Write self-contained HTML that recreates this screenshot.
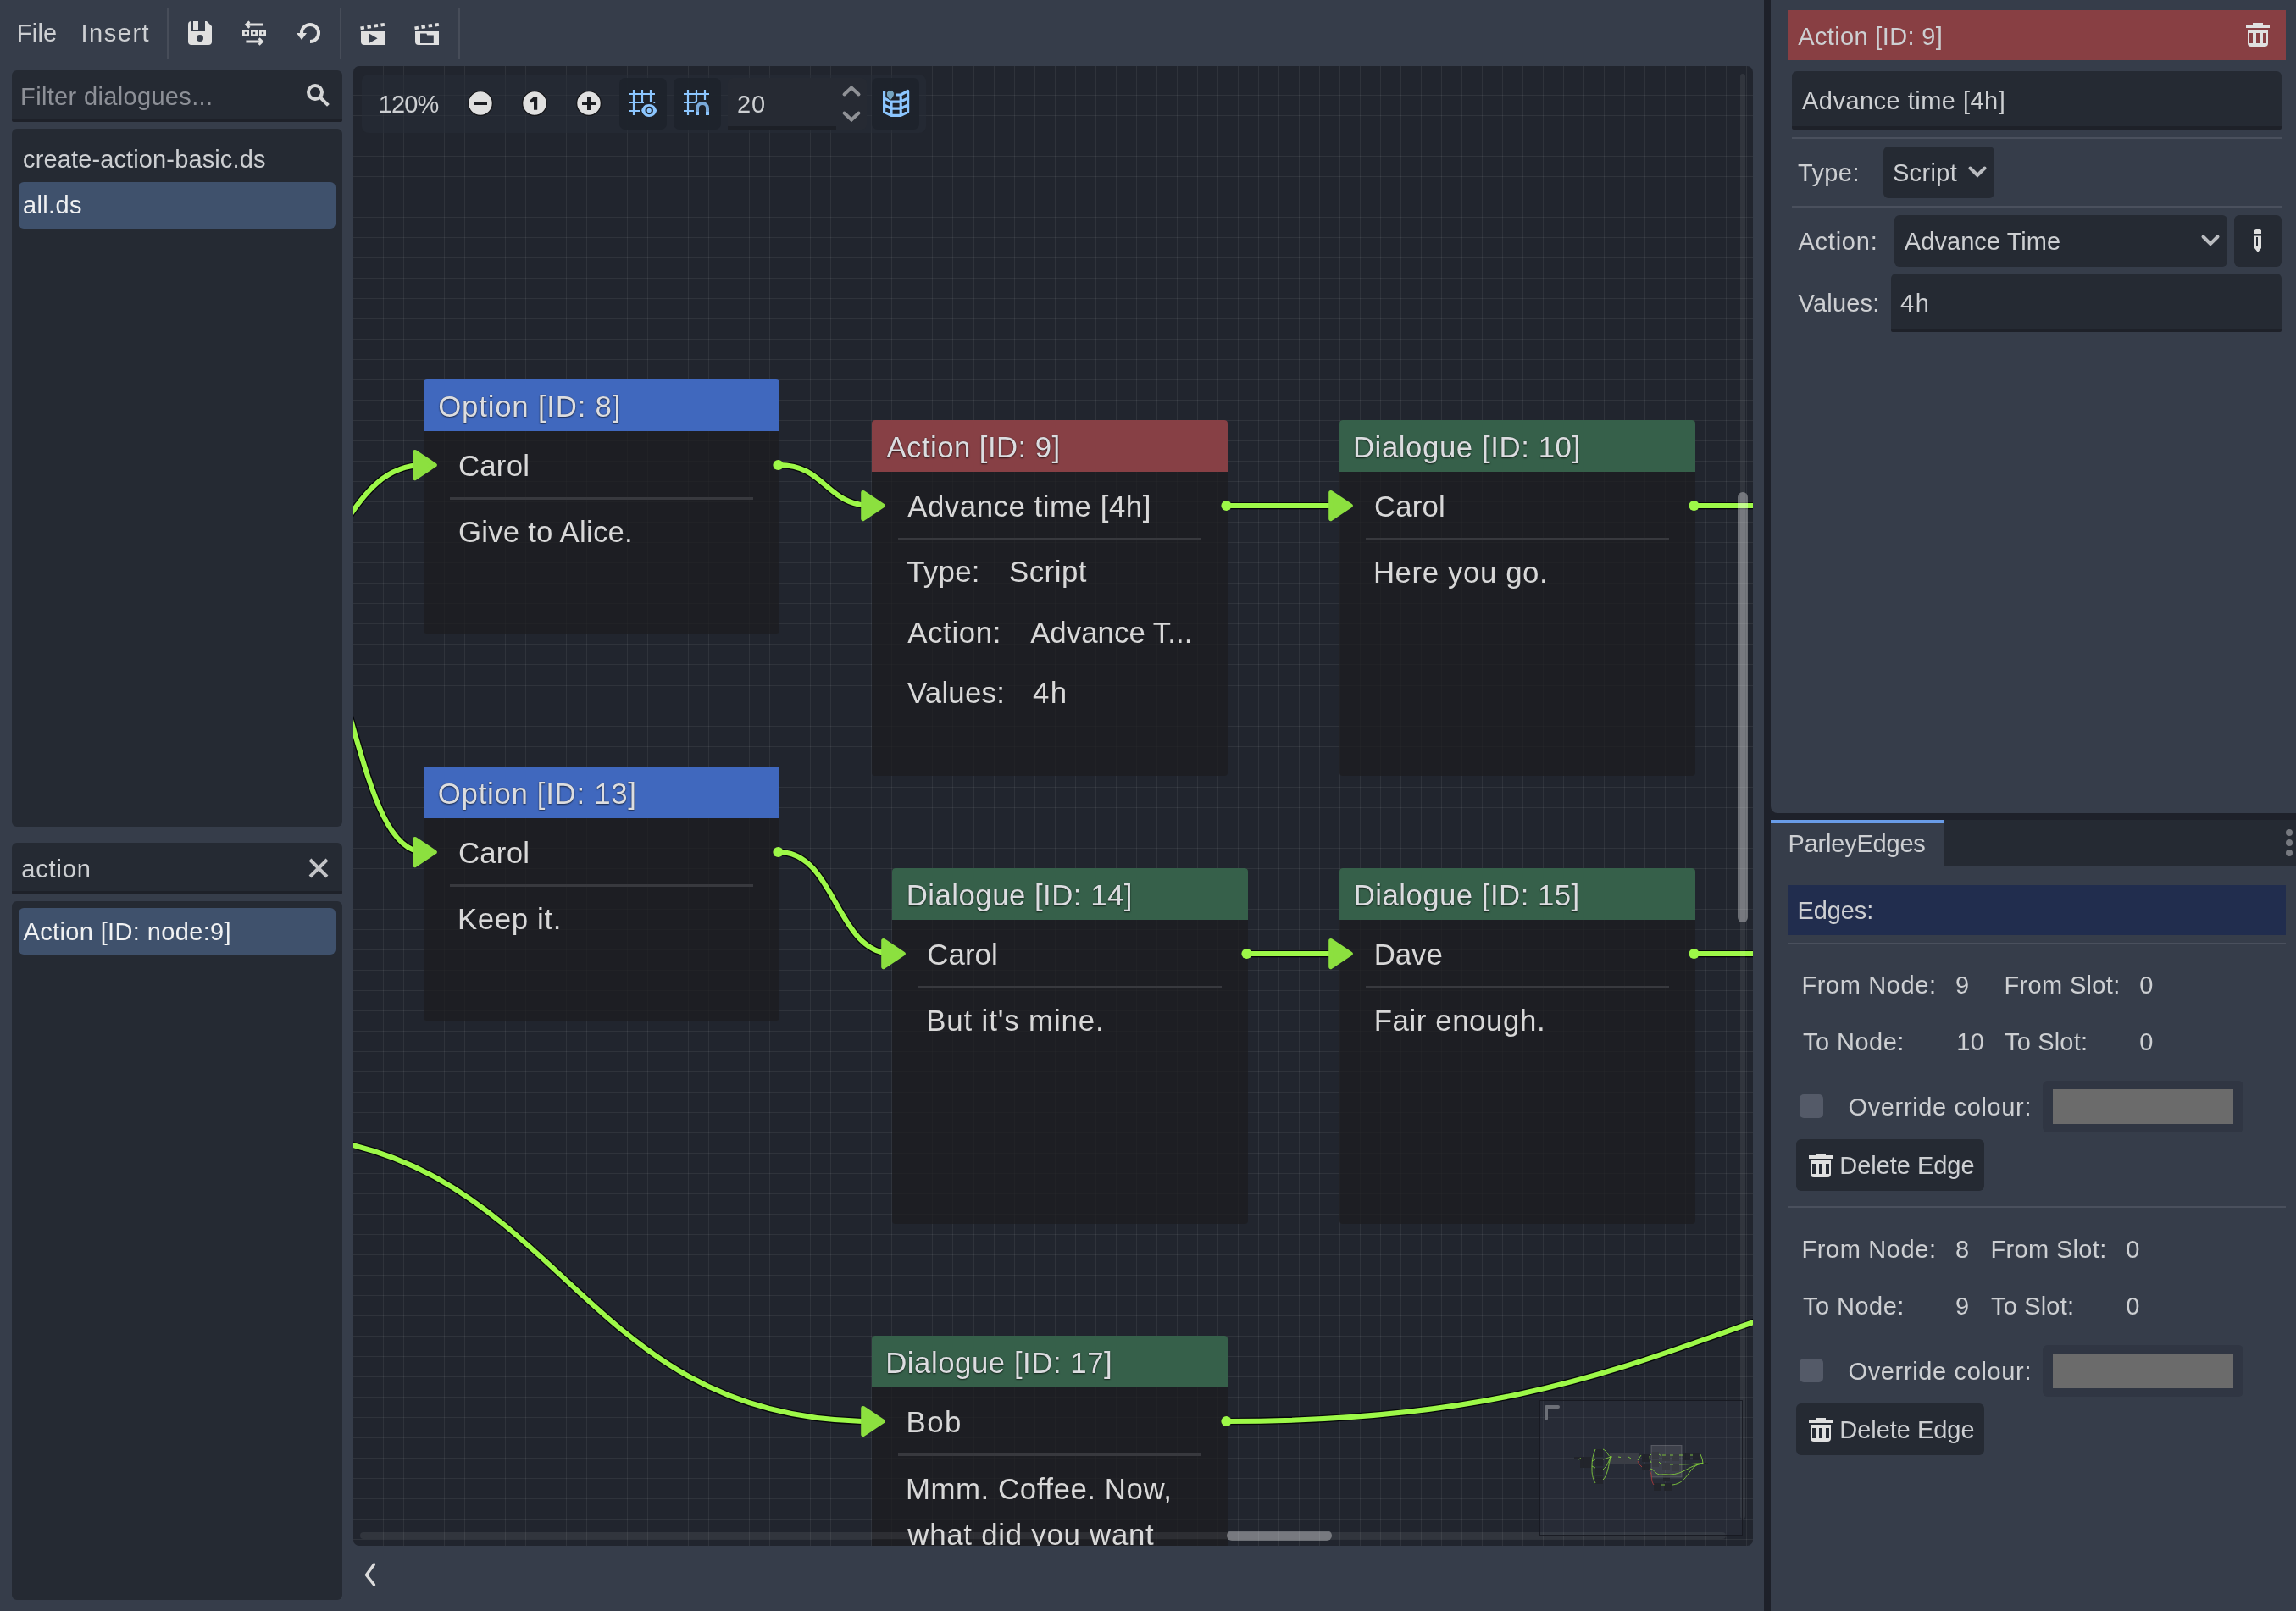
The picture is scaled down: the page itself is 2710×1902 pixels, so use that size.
<!DOCTYPE html>
<html><head><meta charset="utf-8"><title>Parley</title>
<style>
*{box-sizing:border-box;margin:0;padding:0}
html,body{width:2710px;height:1902px;overflow:hidden;background:#363d4a}
body{position:relative;will-change:transform;font-family:"Liberation Sans","DejaVu Sans",sans-serif;font-size:29px;color:#cdcfd2}
.a{position:absolute}
.t{position:absolute;white-space:nowrap;line-height:40px;height:40px}
.dark{background:#252a33}
.sep{position:absolute;background:#474d59;width:2px}
.hsep{position:absolute;background:#4a505d;height:2px}
.le{position:absolute;background:#252a33;border-bottom:4px solid #1e2129;border-radius:6px 6px 2px 2px}
.sel{position:absolute;background:#3f516c;border-radius:6px;height:55px}
svg{position:absolute;overflow:visible}
/* graph */
#graph{position:absolute;left:417px;top:78px;width:1652px;height:1747px;background:#21252e;border-radius:7px;overflow:hidden}
#grid{position:absolute;left:0;top:0}
.node{position:absolute;width:420px;background:rgba(28,28,31,.74);border-radius:4px;font-size:34.8px}
.node .hd{position:absolute;left:0;top:0;width:100%;height:61px;border-radius:4px 4px 0 0}
.node .tt{position:absolute;left:18px;top:9px;line-height:44px;white-space:nowrap;color:#dcdde0;text-shadow:0 1px 2px rgba(0,0,0,.6),0 0 1px rgba(0,0,0,.45)}
.node .r{position:absolute;left:43px;line-height:44px;white-space:nowrap;color:#d8d8d8}
.node .ln{position:absolute;left:31px;width:358px;height:3px;background:#38393e}
.opt{background:#4068be}.act{background:#874045}.dlg{background:#36604a}
</style></head>
<body>
<!-- top toolbar -->
<div class="t" id="file" style="left:19.80px;top:19.4px;letter-spacing:0.222px">File</div>
<div class="t" id="insert" style="left:95.42px;top:19.4px;letter-spacing:1.545px">Insert</div>
<div class="sep" style="left:197px;top:10px;height:60px"></div>
<div class="sep" style="left:401px;top:10px;height:60px"></div>
<div class="sep" style="left:541px;top:10px;height:60px"></div>
<svg style="left:220px;top:23px" width="32" height="32" viewBox="0 0 16 16"><path fill="#e0e0e0" fill-rule="evenodd" d="M3 1a2 2 0 0 0-2 2v10a2 2 0 0 0 2 2h10a2 2 0 0 0 2-2V4l-3-3h-1v6H3zM8 9a2 2 0 0 1 0 4 2 2 0 0 1 0-4zM4 1h3v5H4z"/></svg>
<svg style="left:284px;top:23px" width="32" height="32" viewBox="0 0 16 16"><g fill="none" stroke="#e0e0e0"><path stroke-width="1.4" d="M13 3H3.6M5.2 1.2L3.3 3l1.9 1.9M3.2 13h9.2M10.8 11.1l1.9 1.9-1.9 1.9"/><path stroke-width="1.4" d="M1.700 6.700h2.600v2.600h-2.600zM6.700 6.700h2.600v2.600h-2.600zM11.700 6.700h2.600v2.600h-2.600z"/></g></svg>
<svg style="left:348px;top:23px" width="32" height="32" viewBox="0 0 16 16"><path fill="#e0e0e0" d="M9 2a6 6 0 0 0-6 6H1l3 4 3-4H5a4 4 0 1 1 4 4v2a6 6 0 0 0 0-12z"/></svg>
<svg style="left:424px;top:23px" width="32" height="32" viewBox="0 0 16 16"><path fill="#e0e0e0" fill-rule="evenodd" d="M1 7v6a2 2 0 0 0 2 2h12V7zM6 8.4v5.5l4.8-2.75zM.6 4.2l2.2-.35.3 1.9-2.2.35zM4.6 3.55l2.2-.35.3 1.9-2.2.35zM8.65 2.9l2.2-.35.3 1.9-2.2.35zM12.6 2.3l2.2-.35.3 1.9-2.2.35z"/></svg>
<svg style="left:488px;top:23px" width="32" height="32" viewBox="0 0 16 16"><path fill="#e0e0e0" fill-rule="evenodd" d="M1 7v6a2 2 0 0 0 2 2h12V7zM4 8.2h3.7l.4 1h3.8V14H4zM.6 4.2l2.2-.35.3 1.9-2.2.35zM4.6 3.55l2.2-.35.3 1.9-2.2.35zM8.65 2.9l2.2-.35.3 1.9-2.2.35zM12.6 2.3l2.2-.35.3 1.9-2.2.35z"/></svg>


<!-- left sidebar -->
<div class="le" style="left:14px;top:83px;width:390px;height:61px"></div>
<div class="t" id="filter" style="left:24.10px;top:93.5px;letter-spacing:0.339px;color:#8d9097">Filter dialogues...</div>
<div class="a dark" style="left:14px;top:152px;width:390px;height:824px;border-radius:6px"></div>
<div class="t" id="f1" style="left:27.03px;top:167.6px;letter-spacing:0.131px">create-action-basic.ds</div>
<div class="sel" style="left:22px;top:215px;width:374px;height:55px"></div>
<div class="t" id="f2" style="left:27.03px;top:222.4px;letter-spacing:0.355px;color:#f0f1f2">all.ds</div>
<div class="le" style="left:14px;top:995px;width:390px;height:61px"></div>
<div class="t" id="actf" style="left:25.23px;top:1005.7px;letter-spacing:0.879px">action</div>
<div class="a dark" style="left:14px;top:1064px;width:390px;height:825px;border-radius:6px"></div>
<div class="sel" style="left:22px;top:1072px;width:374px;height:55px"></div>
<div class="t" id="acti" style="left:27.49px;top:1079.8px;letter-spacing:0.364px;color:#f0f1f2">Action [ID: node:9]</div>
<svg style="left:360px;top:97px" width="32" height="32" viewBox="0 0 16 16"><g fill="none" stroke="#d4d5d6" stroke-width="2"><circle cx="6" cy="6" r="4"/><path d="M8.8 8.8l4.9 4.9"/></g></svg>
<svg style="left:360px;top:1009px" width="32" height="32" viewBox="0 0 16 16"><path fill="none" stroke="#c3c4c7" stroke-width="2" d="M3 3l10 10M13 3L3 13"/></svg>


<!-- graph -->
<div id="graph">
<svg id="grid" width="1652" height="1747" shape-rendering="crispEdges"><g stroke="#fff" stroke-opacity=".068" stroke-width="1" fill="none"><path d="M11.5 0V1747M35.5 0V1747M59.5 0V1747M83.5 0V1747M107.5 0V1747M131.5 0V1747M155.5 0V1747M179.5 0V1747M203.5 0V1747M227.5 0V1747M251.5 0V1747M275.5 0V1747M299.5 0V1747M323.5 0V1747M347.5 0V1747M371.5 0V1747M395.5 0V1747M419.5 0V1747M443.5 0V1747M467.5 0V1747M491.5 0V1747M515.5 0V1747M539.5 0V1747M563.5 0V1747M587.5 0V1747M611.5 0V1747M635.5 0V1747M659.5 0V1747M683.5 0V1747M707.5 0V1747M732.5 0V1747M756.5 0V1747M780.5 0V1747M804.5 0V1747M828.5 0V1747M852.5 0V1747M876.5 0V1747M900.5 0V1747M924.5 0V1747M948.5 0V1747M972.5 0V1747M996.5 0V1747M1020.5 0V1747M1044.5 0V1747M1068.5 0V1747M1092.5 0V1747M1116.5 0V1747M1140.5 0V1747M1164.5 0V1747M1188.5 0V1747M1212.5 0V1747M1236.5 0V1747M1260.5 0V1747M1284.5 0V1747M1308.5 0V1747M1332.5 0V1747M1356.5 0V1747M1380.5 0V1747M1404.5 0V1747M1428.5 0V1747M1452.5 0V1747M1476.5 0V1747M1500.5 0V1747M1524.5 0V1747M1548.5 0V1747M1572.5 0V1747M1596.5 0V1747M1620.5 0V1747M1644.5 0V1747"/><path d="M0 10.5H1652M0 34.5H1652M0 58.5H1652M0 82.5H1652M0 106.5H1652M0 130.5H1652M0 154.5H1652M0 178.5H1652M0 202.5H1652M0 226.5H1652M0 250.5H1652M0 274.5H1652M0 298.5H1652M0 322.5H1652M0 346.5H1652M0 370.5H1652M0 394.5H1652M0 418.5H1652M0 442.5H1652M0 466.5H1652M0 490.5H1652M0 514.5H1652M0 538.5H1652M0 562.5H1652M0 586.5H1652M0 610.5H1652M0 634.5H1652M0 658.5H1652M0 682.5H1652M0 706.5H1652M0 731.5H1652M0 755.5H1652M0 779.5H1652M0 803.5H1652M0 827.5H1652M0 851.5H1652M0 875.5H1652M0 899.5H1652M0 923.5H1652M0 947.5H1652M0 971.5H1652M0 995.5H1652M0 1019.5H1652M0 1043.5H1652M0 1067.5H1652M0 1091.5H1652M0 1115.5H1652M0 1139.5H1652M0 1163.5H1652M0 1187.5H1652M0 1211.5H1652M0 1235.5H1652M0 1259.5H1652M0 1283.5H1652M0 1307.5H1652M0 1331.5H1652M0 1355.5H1652M0 1379.5H1652M0 1403.5H1652M0 1427.5H1652M0 1451.5H1652M0 1475.5H1652M0 1499.5H1652M0 1523.5H1652M0 1547.5H1652M0 1571.5H1652M0 1595.5H1652M0 1619.5H1652M0 1643.5H1652M0 1667.5H1652M0 1691.5H1652M0 1715.5H1652M0 1739.5H1652"/></g></svg>

<div class="node" style="left:83px;top:370px;height:300px"><div class="hd opt"></div><div class="tt" id="n8t" style="left:17.21px;top:10.0px;letter-spacing:0.786px">Option [ID: 8]</div><div class="ln" style="top:139px"></div><div class="r" id="n8r0" style="left:40.90px;top:80.0px;letter-spacing:0.232px">Carol</div><div class="r" id="n8r1" style="left:40.92px;top:157.8px;letter-spacing:0.215px">Give to Alice.</div></div>
<div class="node" style="left:612px;top:418px;height:420px"><div class="hd act"></div><div class="tt" id="n9t" style="left:17.41px;top:10.0px;letter-spacing:0.433px">Action [ID: 9]</div><div class="ln" style="top:139px"></div><div class="r" id="n9r0" style="left:42.13px;top:80.3px;letter-spacing:0.548px">Advance time [4h]</div><div class="r" id="n9r1" style="left:41.15px;top:157.0px;letter-spacing:0.315px">Type:</div><div class="r" id="n9r2" style="left:161.92px;top:157.0px;letter-spacing:0.535px">Script</div><div class="r" id="n9r3" style="left:42.13px;top:228.5px;letter-spacing:0.668px">Action:</div><div class="r" id="n9r4" style="left:187.13px;top:228.5px;letter-spacing:0.036px">Advance T...</div><div class="r" id="n9r5" style="left:42.01px;top:300.0px;letter-spacing:0.221px">Values:</div><div class="r" id="n9r6" style="left:189.90px;top:300.0px;letter-spacing:1.600px">4h</div></div>
<div class="node" style="left:1164px;top:418px;height:420px"><div class="hd dlg"></div><div class="tt" id="n10t" style="left:15.90px;top:10.0px;letter-spacing:0.566px">Dialogue [ID: 10]</div><div class="ln" style="top:139px"></div><div class="r" id="n10r0" style="left:40.90px;top:80.0px;letter-spacing:0.182px">Carol</div><div class="r" id="n10r1" style="left:39.90px;top:157.8px;letter-spacing:0.602px">Here you go.</div></div>
<div class="node" style="left:83px;top:827px;height:300px"><div class="hd opt"></div><div class="tt" id="n13t" style="left:16.84px;top:10.0px;letter-spacing:0.693px">Option [ID: 13]</div><div class="ln" style="top:139px"></div><div class="r" id="n13r0" style="left:40.90px;top:80.0px;letter-spacing:0.232px">Carol</div><div class="r" id="n13r1" style="left:39.90px;top:157.8px;letter-spacing:0.649px">Keep it.</div></div>
<div class="node" style="left:636px;top:947px;height:420px"><div class="hd dlg"></div><div class="tt" id="n14t" style="left:16.68px;top:10.0px;letter-spacing:0.476px">Dialogue [ID: 14]</div><div class="ln" style="top:139px"></div><div class="r" id="n14r0" style="left:41.28px;top:79.8px;letter-spacing:0.079px">Carol</div><div class="r" id="n14r1" style="left:40.18px;top:158.0px;letter-spacing:0.872px">But it's mine.</div></div>
<div class="node" style="left:1164px;top:947px;height:420px"><div class="hd dlg"></div><div class="tt" id="n15t" style="left:16.64px;top:10.0px;letter-spacing:0.460px">Dialogue [ID: 15]</div><div class="ln" style="top:139px"></div><div class="r" id="n15r0" style="left:40.64px;top:79.8px;letter-spacing:-0.035px">Dave</div><div class="r" id="n15r1" style="left:40.64px;top:158.0px;letter-spacing:0.598px">Fair enough.</div></div>
<div class="node" style="left:612px;top:1499px;height:420px"><div class="hd dlg"></div><div class="tt" id="n17t" style="left:16.18px;top:10.0px;letter-spacing:0.522px">Dialogue [ID: 17]</div><div class="ln" style="top:139px"></div><div class="r" id="n17r0" style="left:40.38px;top:80.0px;letter-spacing:1.574px">Bob</div><div class="r" id="n17r1" style="left:39.90px;top:158.5px;letter-spacing:0.568px">Mmm. Coffee. Now,</div><div class="r" id="n17r2" style="left:42.31px;top:213.0px;letter-spacing:0.745px">what did you want</div></div>

<svg width="1652" height="1747" style="left:0;top:0;overflow:hidden"><path d="M-103.0 606.4C-9.8 606.4 -9.8 471.0 83.5 471.0 M-79.9 648.2C1.8 648.2 1.8 928.0 83.5 928.0 M502.5 471.0C557.5 471.0 557.5 519.0 612.5 519.0 M1031.5 519.0C1098.0 519.0 1098.0 519.0 1164.5 519.0 M1583.5 519.0C1683.2 519.0 1683.2 519.0 1783.0 519.0 M502.5 928.0C569.5 928.0 569.5 1048.0 636.5 1048.0 M1055.5 1048.0C1110.0 1048.0 1110.0 1048.0 1164.5 1048.0 M1583.5 1048.0C1683.2 1048.0 1683.2 1048.0 1783.0 1048.0 M-117.3 1260.3C247.6 1260.3 247.6 1600.0 612.5 1600.0 M1031.5 1600.0C1611.5 1600.0 1611.5 1394.9 2191.6 1394.9" fill="none" stroke="#05070a" stroke-width="8.6" stroke-linecap="round"/><path d="M-103.0 606.4C-9.8 606.4 -9.8 471.0 83.5 471.0 M-79.9 648.2C1.8 648.2 1.8 928.0 83.5 928.0 M502.5 471.0C557.5 471.0 557.5 519.0 612.5 519.0 M1031.5 519.0C1098.0 519.0 1098.0 519.0 1164.5 519.0 M1583.5 519.0C1683.2 519.0 1683.2 519.0 1783.0 519.0 M502.5 928.0C569.5 928.0 569.5 1048.0 636.5 1048.0 M1055.5 1048.0C1110.0 1048.0 1110.0 1048.0 1164.5 1048.0 M1583.5 1048.0C1683.2 1048.0 1683.2 1048.0 1783.0 1048.0 M-117.3 1260.3C247.6 1260.3 247.6 1600.0 612.5 1600.0 M1031.5 1600.0C1611.5 1600.0 1611.5 1394.9 2191.6 1394.9" fill="none" stroke="#9df848" stroke-width="6" stroke-linecap="round"/><circle cx="501.5" cy="471.0" r="6.1" fill="#9df848"/><circle cx="1030.5" cy="519.0" r="6.1" fill="#9df848"/><circle cx="1582.5" cy="519.0" r="6.1" fill="#9df848"/><circle cx="501.5" cy="928.0" r="6.1" fill="#9df848"/><circle cx="1054.5" cy="1048.0" r="6.1" fill="#9df848"/><circle cx="1582.5" cy="1048.0" r="6.1" fill="#9df848"/><circle cx="1030.5" cy="1600.0" r="6.1" fill="#9df848"/><path d="M72.7 455.4L96.3 471.0L72.7 486.6Z" fill="#8ce03f" stroke="#8ce03f" stroke-width="5" stroke-linejoin="round"/><path d="M601.7 503.4L625.3 519.0L601.7 534.6Z" fill="#8ce03f" stroke="#8ce03f" stroke-width="5" stroke-linejoin="round"/><path d="M1153.7 503.4L1177.3 519.0L1153.7 534.6Z" fill="#8ce03f" stroke="#8ce03f" stroke-width="5" stroke-linejoin="round"/><path d="M72.7 912.4L96.3 928.0L72.7 943.6Z" fill="#8ce03f" stroke="#8ce03f" stroke-width="5" stroke-linejoin="round"/><path d="M625.7 1032.4L649.3 1048.0L625.7 1063.6Z" fill="#8ce03f" stroke="#8ce03f" stroke-width="5" stroke-linejoin="round"/><path d="M1153.7 1032.4L1177.3 1048.0L1153.7 1063.6Z" fill="#8ce03f" stroke="#8ce03f" stroke-width="5" stroke-linejoin="round"/><path d="M601.7 1584.4L625.3 1600.0L601.7 1615.6Z" fill="#8ce03f" stroke="#8ce03f" stroke-width="5" stroke-linejoin="round"/></svg>

<!-- graph toolbar (coords relative to graph: abs-417, abs-78) -->
<div class="a" style="left:10px;top:10px;width:666px;height:69px;border-radius:8px;background:rgba(40,45,56,.5)"></div>
<div class="t" id="zoom" style="left:29.81px;top:25.2px;letter-spacing:-0.861px">120%</div>
<svg style="left:134px;top:28px" width="32" height="32" viewBox="0 0 32 32"><circle cx="16" cy="16" r="14.4" fill="#e0e0e0" stroke="#17181c" stroke-width="1.4"/><path d="M8 14h16v4H8z" fill="#1b1d22"/></svg>
<svg style="left:198px;top:28px" width="32" height="32" viewBox="0 0 32 32"><circle cx="16" cy="16" r="14.4" fill="#e0e0e0" stroke="#17181c" stroke-width="1.4"/><path d="M15.2 8.2h4v15.6h-4.2v-10.4l-3 2.2-2-2.9z" fill="#1b1d22"/></svg>
<svg style="left:262px;top:28px" width="32" height="32" viewBox="0 0 32 32"><circle cx="16" cy="16" r="14.4" fill="#e0e0e0" stroke="#17181c" stroke-width="1.4"/><path d="M8 14h6V8h4v6h6v4h-6v6h-4v-6H8z" fill="#1b1d22"/></svg>
<div class="a" style="left:314px;top:14px;width:56px;height:61px;border-radius:7px;background:rgba(30,35,44,.94)"></div>
<svg style="left:326px;top:28px" width="32" height="32" viewBox="0 0 16 16"><g fill="none" stroke="#8cc6ff" stroke-width="1.1"><path d="M2.5 0v15M7.5 0v7.6M12.5 0v7.2M0 2.5h15M0 7.5h8.5M14.2 7.5h.9M0 12.5h6"/></g><path d="M11.6 8c2.4 0 4.300 1.700 5 4.200-.700 2.500-2.600 4.200-5 4.200s-4.300-1.700-5-4.200c.700-2.500 2.600-4.200 5-4.200z" fill="#8cc6ff" stroke="#1e232c" stroke-width=".9"/><circle cx="11.6" cy="12.2" r="1.85" fill="none" stroke="#1e232c" stroke-width="1.05"/></svg>
<div class="a" style="left:378px;top:14px;width:56px;height:61px;border-radius:7px;background:rgba(30,35,44,.94)"></div>
<svg style="left:390px;top:28px" width="32" height="32" viewBox="0 0 16 16"><g fill="none" stroke="#8cc6ff" stroke-width="1.1"><path d="M2.5 0v15M7.5 0v6.3q0 1.2-1.2 1.2H0M12.5 0v6M0 2.5h15M0 12.5h6"/></g><path d="M7 15v-4a4 4 0 0 1 8 0v4h-2v-4a2 2 0 0 0-4 0v4z" fill="#7aa9d9"/><path d="M7 13h2v2H7zM13 13h2v2h-2z" fill="#8cc6ff"/></svg>
<div class="a" style="left:442px;top:14px;width:164px;height:61px;border-radius:6px;background:#262a33"></div>
<div class="a" style="left:442px;top:71px;width:128px;height:4px;background:#1d2027"></div>
<div class="t" id="snap" style="left:453.08px;top:25.2px;letter-spacing:0.894px">20</div>
<svg style="left:576px;top:22px" width="24" height="46" viewBox="0 0 24 46"><path d="M3.5 11.5L12 3.5l8.500 8M3.500 33.500L12 41.500l8.500-8" fill="none" stroke="#8f9196" stroke-width="4" stroke-linecap="round" stroke-linejoin="miter"/></svg>
<div class="a" style="left:612px;top:14px;width:56px;height:61px;border-radius:7px;background:rgba(30,35,44,.94)"></div>
<svg style="left:624px;top:28px" width="32" height="32" viewBox="0 0 16 16"><g fill="none" stroke="#8cc6ff" stroke-width="1.6" stroke-linejoin="round"><path d="M1.3 .7v12.4l4.2 2.1h5.600l4.200-2.100V.7L11.100 3H8M5.500 6.800v8.400M11.100 3v12.200M1.300 4.900l4.200 2.200h5.600l4.200-2.200M1.300 9l4.200 2.100h5.600L15.300 9"/></g><path d="M4.950 6.300c-1.200-1.200-2.300-2.400-2.300-3.800a2.300 2.300 0 0 1 4.600 0c0 1.400-1.100 2.600-2.300 3.800z" fill="#74a3c0" stroke="#1e232c" stroke-width=".5"/></svg>
<!-- scrollbars -->
<div class="a" style="left:1637px;top:9px;width:6px;height:1706px;border-radius:3px;background:rgba(255,255,255,.075)"></div>
<div class="a" style="left:1634px;top:503px;width:12px;height:508px;border-radius:6px;background:rgba(255,255,255,.34)"></div>
<div class="a" style="left:8px;top:1731px;width:1612px;height:8px;border-radius:4px;background:rgba(255,255,255,.075)"></div>
<div class="a" style="left:1031px;top:1729px;width:124px;height:12px;border-radius:6px;background:rgba(255,255,255,.34)"></div>
<!-- minimap -->
<div class="a" style="left:1400px;top:1575px;width:240px;height:160px;background:rgba(70,78,96,.17);border:1px solid rgba(22,24,30,.85)"></div>
<svg style="left:1400px;top:1575px" width="240" height="160" viewBox="0 0 240 160">
<path d="M8 22V8h14" fill="none" stroke="#6c6f77" stroke-width="4" stroke-linecap="round" stroke-linejoin="round"/>
<g fill="#22242b"><rect x="41" y="67" width="8" height="3"/><rect x="48" y="67" width="13" height="13"/><rect x="66" y="58" width="9" height="9"/><rect x="66" y="69" width="9" height="9"/><rect x="66" y="80" width="9" height="9"/><rect x="66" y="90" width="9" height="9"/><rect x="66" y="93" width="9" height="6"/>
<rect x="121" y="64" width="9" height="9"/><rect x="121" y="76" width="9" height="7"/><rect x="132" y="61" width="9" height="8"/><rect x="132" y="71" width="9" height="8"/><rect x="145" y="64" width="9" height="8"/><rect x="145" y="74" width="9" height="9"/><rect x="157" y="64" width="8" height="8"/><rect x="157" y="76" width="8" height="8"/><rect x="169" y="62" width="9" height="9"/><rect x="181" y="62" width="9" height="9"/><rect x="146" y="86" width="8" height="9"/><rect x="146" y="91" width="8" height="4"/><rect x="135" y="98" width="9" height="9"/><rect x="147" y="98" width="10" height="9"/><rect x="194" y="74" width="5" height="2"/></g>
<rect x="83" y="62" width="35" height="13" fill="#3a3d45"/>
<rect x="132" y="53.500" width="36" height="37.500" fill="rgba(255,255,255,.1)" stroke="rgba(255,255,255,.18)" stroke-width="1"/>
<g fill="none" stroke="#86d63c" stroke-width=".85"><path d="M46 70l3-1.500M66 58c-4 10-4 16-4 24s2 12 4 16M75 58c5 2 6 8 9 9M75 70c4-1 6-2 9-3M75 82c5-4 7-10 9-15M75 94c5-4 7-18 9-27M62 72l4-2M62 78l4 2M84 67h2M93 67l3 .500M105 67l3 2M116 71l4-6M132 64l-2 2q0 6 2 8M141 64l3 2M145 65h4M154 65h4M165 65h4M178 65h3M190 64q3 6 3 11M141 73l3 3M154 76h4M165 76c10 0 20-1 28-1.500M130 81c6 0 7 8 14 7s4 0 10 0c16 0 24-12 39-13M157 100c20-2 18-24 36-25M144 100h4"/></g>
<g fill="none" stroke="#a83838" stroke-width=".9"><path d="M116 72q2 5 5 7M130 83c4 6 1 12 5 17"/></g>
</svg>

</div>
<svg style="left:428px;top:1844px" width="18" height="30" viewBox="0 0 18 30"><path d="M13.5 3L4.5 15.5 13.5 27" fill="none" stroke="#dcdcdc" stroke-width="3.4" stroke-linecap="round" stroke-linejoin="miter"/></svg>


<!-- right dock -->
<div class="a" style="left:2082px;top:0;width:628px;height:1902px;background:#1e212a"></div>
<div class="a" style="left:2090px;top:0;width:620px;height:960px;background:#363d4a;border-bottom-left-radius:8px"></div>
<div class="a" style="left:2090px;top:968px;width:620px;height:55px;background:#252a33"></div>
<div class="a" style="left:2090px;top:968px;width:204px;height:55px;background:#363d4a;border-top:4px solid #699ce8"></div>
<div class="a" style="left:2090px;top:1023px;width:620px;height:879px;background:#363d4a"></div>
<div class="a" style="left:2110px;top:12px;width:588px;height:59px;background:#883f43"></div>
<div class="t" id="rh" style="left:2122.30px;top:22.5px;letter-spacing:0.341px">Action [ID: 9]</div>
<svg style="left:2649px;top:25px" width="32" height="32" viewBox="0 0 16 16"><path fill="#e0e0e0" fill-rule="evenodd" d="M5 1v1H1v2h14V2h-4V1zM2 5v8a2 2 0 0 0 2 2h8a2 2 0 0 0 2-2V5zm1 2h2v6H3zm4 0h2v6H7zm4 0h2v6h-2z"/></svg>
<div class="le" style="left:2115px;top:84px;width:578px;height:69px"></div>
<div class="t" id="rname" style="left:2126.99px;top:98.8px;letter-spacing:0.478px">Advance time [4h]</div>
<div class="hsep" style="left:2115px;top:162px;width:578px"></div>
<div class="t" id="rtype" style="left:2121.96px;top:183.8px;letter-spacing:0.392px">Type:</div>
<div class="a dark" style="left:2223px;top:173px;width:131px;height:61px;border-radius:6px"></div>
<div class="t" id="rscript" style="left:2233.88px;top:183.8px;letter-spacing:0.382px">Script</div>
<svg style="left:2322px;top:195px" width="24" height="16" viewBox="0 0 24 16"><path d="M3.5 3.500L12 12l8.500-8.500" fill="none" stroke="#babcc0" stroke-width="4" stroke-linecap="round" stroke-linejoin="miter"/></svg>
<div class="hsep" style="left:2115px;top:243px;width:578px"></div>
<div class="t" id="raction" style="left:2122.49px;top:264.5px;letter-spacing:0.757px">Action:</div>
<div class="a dark" style="left:2236px;top:254px;width:393px;height:61px;border-radius:6px"></div>
<div class="t" id="radv" style="left:2247.85px;top:264.5px;letter-spacing:0.052px">Advance Time</div>
<svg style="left:2597px;top:276px" width="24" height="16" viewBox="0 0 24 16"><path d="M3.5 3.500L12 12l8.500-8.500" fill="none" stroke="#babcc0" stroke-width="4" stroke-linecap="round" stroke-linejoin="miter"/></svg>
<div class="a dark" style="left:2637px;top:254px;width:56px;height:61px;border-radius:6px"></div>
<svg style="left:2649px;top:268px" width="32" height="32" viewBox="0 0 16 16"><path fill="#e0e0e0" fill-rule="evenodd" d="M7 1a1 1 0 0 0-1 1v2h4V2a1 1 0 0 0-1-1zM6 5.200v7.300l2 2.500 2-2.500V5.200zM7 6h1v5H7z"/></svg>
<div class="t" id="rvalues" style="left:2122.57px;top:338.0px;letter-spacing:0.206px">Values:</div>
<div class="le" style="left:2232px;top:323px;width:461px;height:69px"></div>
<div class="t" id="r4h" style="left:2242.96px;top:338.0px;letter-spacing:1.600px">4h</div>
<div class="t" id="tab" style="left:2110.50px;top:976.2px;letter-spacing:-0.209px">ParleyEdges</div>
<svg style="left:2694px;top:974px" width="16" height="44" viewBox="0 0 16 44"><g fill="#777a80"><circle cx="8" cy="9" r="4"/><circle cx="8" cy="21" r="4"/><circle cx="8" cy="33" r="4"/></g></svg>
<div class="a" style="left:2110px;top:1045px;width:588px;height:59px;background:#212d4e"></div>
<div class="t" id="edges" style="left:2121.50px;top:1055.4px;letter-spacing:-0.100px">Edges:</div>
<div class="hsep" style="left:2110px;top:1113px;width:588px"></div>
<div class="t" id="b1fn" style="left:2126.50px;top:1143.0px;letter-spacing:0.593px">From Node:</div>
<div class="t" id="b1fnv" style="left:2308.00px;top:1143.0px;letter-spacing:1.600px">9</div>
<div class="t" id="b1fs" style="left:2365.50px;top:1143.0px;letter-spacing:0.337px">From Slot:</div>
<div class="t" id="b1fsv" style="left:2525.24px;top:1143.0px;letter-spacing:1.600px">0</div>
<div class="t" id="b1tn" style="left:2127.96px;top:1210.0px;letter-spacing:0.467px">To Node:</div>
<div class="t" id="b1tnv" style="left:2309.18px;top:1210.0px;letter-spacing:0.549px">10</div>
<div class="t" id="b1ts" style="left:2365.96px;top:1210.0px;letter-spacing:0.190px">To Slot:</div>
<div class="t" id="b1tsv" style="left:2525.24px;top:1210.0px;letter-spacing:1.600px">0</div>
<div class="a" style="left:2124px;top:1292px;width:28px;height:28px;border-radius:5px;background:#545a68"></div>
<div class="t" id="b1oc" style="left:2181.47px;top:1287.0px;letter-spacing:0.646px">Override colour:</div>
<div class="a" style="left:2411px;top:1276px;width:237px;height:61px;border-radius:6px;background:#303643"></div>
<div class="a" style="left:2423px;top:1286px;width:213px;height:41px;background:#6b6b6b"></div>
<div class="a dark" style="left:2120px;top:1345px;width:222px;height:61px;border-radius:6px"></div>
<svg style="left:2132.500px;top:1359.5px" width="32" height="32" viewBox="0 0 16 16"><path fill="#e0e0e0" fill-rule="evenodd" d="M5 1v1H1v2h14V2h-4V1zM2 5v8a2 2 0 0 0 2 2h8a2 2 0 0 0 2-2V5zm1 2h2v6H3zm4 0h2v6H7zm4 0h2v6h-2z"/></svg>
<div class="t" id="b1de" style="left:2171.30px;top:1355.5px;letter-spacing:-0.039px">Delete Edge</div>
<div class="hsep" style="left:2110px;top:1424px;width:588px"></div>
<div class="t" id="b2fn" style="left:2126.50px;top:1455.0px;letter-spacing:0.593px">From Node:</div>
<div class="t" id="b2fnv" style="left:2308.09px;top:1455.0px;letter-spacing:1.600px">8</div>
<div class="t" id="b2fs" style="left:2349.50px;top:1455.0px;letter-spacing:0.337px">From Slot:</div>
<div class="t" id="b2fsv" style="left:2509.24px;top:1455.0px;letter-spacing:1.600px">0</div>
<div class="t" id="b2tn" style="left:2127.96px;top:1522.0px;letter-spacing:0.467px">To Node:</div>
<div class="t" id="b2tnv" style="left:2308.00px;top:1522.0px;letter-spacing:1.600px">9</div>
<div class="t" id="b2ts" style="left:2349.96px;top:1522.0px;letter-spacing:0.190px">To Slot:</div>
<div class="t" id="b2tsv" style="left:2509.24px;top:1522.0px;letter-spacing:1.600px">0</div>
<div class="a" style="left:2124px;top:1604px;width:28px;height:28px;border-radius:5px;background:#545a68"></div>
<div class="t" id="b2oc" style="left:2181.47px;top:1599.0px;letter-spacing:0.646px">Override colour:</div>
<div class="a" style="left:2411px;top:1588px;width:237px;height:61px;border-radius:6px;background:#303643"></div>
<div class="a" style="left:2423px;top:1598px;width:213px;height:41px;background:#6b6b6b"></div>
<div class="a dark" style="left:2120px;top:1657px;width:222px;height:61px;border-radius:6px"></div>
<svg style="left:2132.500px;top:1671.5px" width="32" height="32" viewBox="0 0 16 16"><path fill="#e0e0e0" fill-rule="evenodd" d="M5 1v1H1v2h14V2h-4V1zM2 5v8a2 2 0 0 0 2 2h8a2 2 0 0 0 2-2V5zm1 2h2v6H3zm4 0h2v6H7zm4 0h2v6h-2z"/></svg>
<div class="t" id="b2de" style="left:2171.30px;top:1667.5px;letter-spacing:-0.039px">Delete Edge</div>

</body></html>
